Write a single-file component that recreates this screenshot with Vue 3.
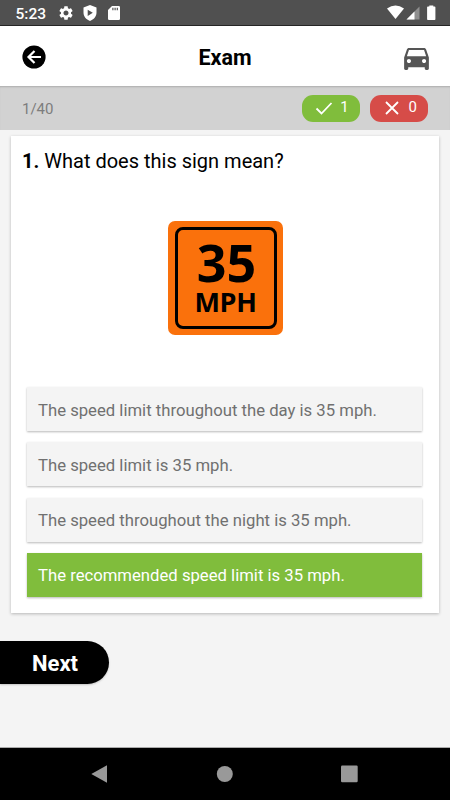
<template>
  <div class="screen">
    <div class="status-bar">
      <span class="clock">5:23</span>
      <svg class="status-gear" viewBox="2 2 20 20">
        <path
          d="M19.14 12.94c.04-.3.06-.61.06-.94 0-.32-.02-.64-.07-.94l2.03-1.58c.18-.14.23-.41.12-.61l-1.92-3.32c-.12-.22-.37-.29-.59-.22l-2.39.96c-.5-.38-1.03-.7-1.62-.94l-.36-2.54c-.04-.24-.24-.41-.48-.41h-3.84c-.24 0-.43.17-.47.41l-.36 2.54c-.59.24-1.13.57-1.62.94l-2.39-.96c-.22-.08-.47 0-.59.22L2.74 8.87c-.12.21-.08.47.12.61l2.03 1.58c-.05.3-.09.63-.09.94s.02.64.07.94l-2.03 1.58c-.18.14-.23.41-.12.61l1.92 3.32c.12.22.37.29.59.22l2.39-.96c.5.38 1.03.7 1.62.94l.36 2.54c.05.24.24.41.48.41h3.84c.24 0 .44-.17.47-.41l.36-2.54c.59-.24 1.13-.56 1.62-.94l2.39.96c.22.08.47 0 .59-.22l1.92-3.32c.12-.22.07-.47-.12-.61l-2.01-1.58zM12 15.6c-1.98 0-3.6-1.62-3.6-3.6s1.62-3.6 3.6-3.6 3.6 1.62 3.6 3.6-1.62 3.6-3.6 3.6z"
        />
      </svg>
      <svg class="status-shield" viewBox="0 0 14 16">
        <path
          fill-rule="evenodd"
          d="M7 0l6.5 2.6v5C13.5 11.4 10.8 14.7 7 16 3.2 14.7.5 11.4.5 7.6v-5zM4.7 4.7v6.2l5.1-3.1z"
        />
      </svg>
      <svg class="status-card" viewBox="0 0 12 14">
        <path
          fill-rule="evenodd"
          d="M4 0h6.700Q12 0 12 1.300v11.400Q12 14 10.700 14H1.300Q0 14 0 12.700V4zM4.300 1.800v2.400h1.200V1.800zm2.200 0v2.400h1.200V1.800zm2.200 0v2.400h1.200V1.800z"
        />
      </svg>
      <svg class="status-signals" viewBox="0 0 50 16">
        <path d="M0 3.400Q8.500-2.400 17 3.400L8.500 14z" />
        <path d="M32.500 1.500v13H19.500z" fill="#8f8f8f" />
        <path d="M27.500 6.500v8h-8z" />
        <path d="M42.300 1.500V.5h4v1h1.300q.8 0 .8.800v11.900q0 .8-.8.800h-6.700q-.8 0-.8-.8V2.300q0-.8.8-.8z" />
      </svg>
    </div>

    <header class="app-bar">
      <button class="icon-button" aria-label="Back">
        <svg class="back-icon" viewBox="0 0 24 24">
          <circle cx="12" cy="12" r="11.600" fill="#000" />
          <path d="M19 12H7M12.500 6l-6 6 6 6" fill="none" stroke="#fff" stroke-width="2.200" />
        </svg>
      </button>
      <h1 class="title">Exam</h1>
      <button class="icon-button" aria-label="Vehicle">
        <svg class="car-icon" viewBox="0 0 24 24">
          <path
            d="M18.920 6.010C18.720 5.420 18.160 5 17.500 5h-11c-.66 0-1.210.42-1.420 1.010L3 12v8c0 .55.45 1 1 1h1c.55 0 1-.45 1-1v-1h12v1c0 .55.45 1 1 1h1c.55 0 1-.45 1-1v-8l-2.080-5.990zM6.500 16c-.83 0-1.500-.67-1.500-1.500S5.670 13 6.500 13s1.500.67 1.500 1.500S7.330 16 6.500 16zm11 0c-.83 0-1.500-.67-1.500-1.500s.67-1.500 1.500-1.500 1.500.67 1.500 1.500-.67 1.500-1.500 1.500zM5 11l1.500-4.500h11L19 11H5z"
          />
        </svg>
      </button>
    </header>

    <div class="progress-bar">
      <span class="progress">1/{{ total }}</span>
      <div class="badge correct">
        <svg viewBox="0 0 18 14"><path d="M1.500 7.500l5 5L16.500 2" /></svg>
        <span>{{ correctCount }}</span>
      </div>
      <div class="badge wrong">
        <svg viewBox="0 0 18 14"><path d="M3 1l12 12M15 1l-12 12" /></svg>
        <span>{{ wrongCount }}</span>
      </div>
    </div>

    <main class="content">
      <section class="card">
        <h2 class="question"><b>1.</b> What does this sign mean?</h2>
        <div class="sign">
          <div class="sign-inner">
            <span class="sign-number">35</span>
            <span class="sign-unit">MPH</span>
          </div>
        </div>
        <div class="options">
          <button
            v-for="(option, index) in options"
            :key="index"
            class="option"
            :class="{ selected: selected === index }"
            @click="selected = index"
          >
            {{ option }}
          </button>
        </div>
      </section>
      <button class="next">Next</button>
    </main>

    <nav class="nav-bar">
      <svg viewBox="0 0 18 18"><path d="M16 .2v17.600L.3 9z" /></svg>
      <svg viewBox="0 0 18 18"><circle cx="8.800" cy="9" r="8" /></svg>
      <svg viewBox="0 0 18 18"><rect x="0" y=".5" width="16.700" height="16.700" rx="1.200" /></svg>
    </nav>
  </div>
</template>

<script setup>
import { ref } from 'vue'

const total = 40
const correctCount = ref(1)
const wrongCount = ref(0)
const selected = ref(3)

const options = [
  'The speed limit throughout the day is 35 mph.',
  'The speed limit is 35 mph.',
  'The speed throughout the night is 35 mph.',
  'The recommended speed limit is 35 mph.',
]
</script>

<style>
body {
  margin: 0;
}
</style>

<style scoped>
.screen {
  display: flex;
  flex-direction: column;
  width: 450px;
  height: 800px;
  overflow: hidden;
  background: #f4f4f4;
  font-family: Roboto, sans-serif;
}

button {
  border: none;
  margin: 0;
  font-family: inherit;
}

/* 状态栏 */
.status-bar {
  display: flex;
  align-items: center;
  box-sizing: border-box;
  height: 26px;
  padding: 1px 13px 0 15.5px;
  background: #505050;
  border-bottom: 1px solid #252525;
  color: #fff;
  fill: #fff;
}

.clock {
  width: 43px;
  padding-top: 2px;
  font-size: 15.5px;
  font-weight: 500;
}

.status-gear {
  width: 14px;
  height: 14px;
}

.status-shield {
  width: 14px;
  height: 16px;
  margin-left: 10px;
}

.status-card {
  width: 12px;
  height: 14px;
  margin-left: 11px;
}

.status-signals {
  width: 50px;
  height: 16px;
  margin-left: auto;
}

/* 标题栏 */
.app-bar {
  display: flex;
  align-items: center;
  justify-content: space-between;
  box-sizing: border-box;
  height: 60px;
  padding: 2px 17px 0 22px;
  background: #fff;
}

.icon-button {
  display: flex;
  padding: 0;
  background: none;
}

.back-icon {
  width: 24px;
  height: 24px;
}

.title {
  margin: 0;
  padding-left: 4px;
  font-size: 21.5px;
  font-weight: 700;
  color: #000;
}

.car-icon {
  width: 33px;
  height: 33px;
  fill: #555;
}

/* 进度栏 */
.progress-bar {
  display: flex;
  align-items: center;
  box-sizing: border-box;
  height: 44px;
  padding: 0 22px;
  background: #d2d2d2;
  box-shadow: inset 0 2px 2px -1px rgba(0, 0, 0, 0.18);
}

.progress {
  margin-right: auto;
  padding-top: 2px;
  font-size: 15px;
  color: #7d7d7d;
}

.badge {
  display: flex;
  align-items: center;
  justify-content: space-between;
  box-sizing: border-box;
  width: 57.7px;
  height: 27px;
  padding: 0 11px 0 13px;
  border-radius: 11px;
  font-size: 15px;
  color: #fff;
}

.badge span {
  padding-bottom: 2px;
}

.badge svg {
  width: 18px;
  height: 14px;
  fill: none;
  stroke: #fff;
  stroke-width: 1.8;
}

.correct {
  background: #80bd3c;
}

.wrong {
  margin-left: 10.7px;
  background: #d64c48;
}

/* 题目卡片 */
.content {
  display: flex;
  flex: 1;
  flex-direction: column;
  align-items: flex-start;
  padding-top: 6px;
}

.card {
  display: flex;
  flex-direction: column;
  align-items: center;
  box-sizing: border-box;
  width: 428px;
  height: 477px;
  margin-left: 11px;
  background: #fff;
  box-shadow: 0 1px 3px rgba(0, 0, 0, 0.25);
}

.question {
  align-self: flex-start;
  margin: 12px 0 0 11px;
  font-size: 20px;
  font-weight: 400;
  line-height: 26px;
  color: #000;
}

.sign {
  box-sizing: border-box;
  width: 115px;
  height: 114px;
  margin-top: 47px;
  padding: 6px 6px 6px 7px;
  border-radius: 7px;
  background: #fa710c;
}

.sign-inner {
  display: flex;
  flex-direction: column;
  align-items: center;
  box-sizing: border-box;
  height: 102px;
  border: 3px solid #000;
  border-radius: 8px;
  font-family: 'Open Sans', sans-serif;
  font-weight: 700;
  color: #000;
}

.sign-number {
  margin-top: 10px;
  padding-left: 2px;
  font-size: 52px;
  line-height: 44px;
}

.sign-unit {
  margin-top: 4px;
  font-size: 27px;
  line-height: 28px;
  letter-spacing: -0.3px;
}

.options {
  display: flex;
  flex-direction: column;
  gap: 11.33px;
  width: 395px;
  margin: 52px 1px 0 0;
}

.option {
  height: 44px;
  padding: 2px 11px 0;
  background: #f4f4f4;
  box-shadow: 0 1px 2px rgba(0, 0, 0, 0.28);
  font-size: 16.7px;
  text-align: left;
  color: #707070;
}

.option.selected {
  background: #80bd3c;
  color: #fff;
}

.next {
  width: 109px;
  height: 43px;
  margin-top: 28px;
  padding: 2px 0 0 32px;
  border-radius: 0 22px 22px 0;
  background: #000;
  box-shadow: 0 1px 2px rgba(0, 0, 0, 0.2);
  font-size: 22px;
  font-weight: 700;
  text-align: left;
  color: #fff;
}

/* 底部导航 */
.nav-bar {
  display: flex;
  align-items: center;
  justify-content: space-between;
  box-sizing: border-box;
  height: 53px;
  padding: 0 91px;
  background: #000;
  border-top: 1px solid #aaa;
}

.nav-bar svg {
  width: 18px;
  height: 18px;
  fill: #999;
}
</style>
